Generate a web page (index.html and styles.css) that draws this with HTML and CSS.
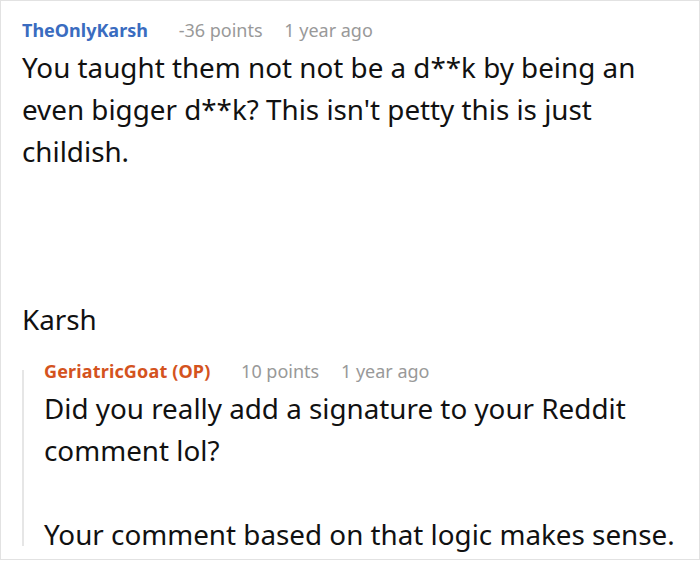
FILE: index.html
```html
<!DOCTYPE html>
<html lang="en">
<head>
    <meta charset="UTF-8">
    <meta name="viewport" content="width=device-width, initial-scale=1.0">
    <title>Comments</title>
    <link rel="stylesheet" href="styles.css">
</head>
<body>
    <div class="thread">
        <div class="comment">
            <div class="meta">
                <span class="author">TheOnlyKarsh</span>
                <span class="points">-36 points</span>
                <span class="time">1 year ago</span>
            </div>
            <div class="body">
                <p>You taught them not not be a d**k by being an even bigger d**k? This isn't petty this is just childish.</p>
                <p class="gap"></p>
                <p>Karsh</p>
            </div>
            <div class="comment reply">
                <div class="meta">
                    <span class="author op">GeriatricGoat (OP)</span>
                    <span class="points">10 points</span>
                    <span class="time">1 year ago</span>
                </div>
                <div class="body">
                    <p>Did you really add a signature to your Reddit comment lol?</p>
                    <p>Your comment based on that logic makes sense.</p>
                </div>
            </div>
        </div>
    </div>
</body>
</html>
```

FILE: styles.css
```css
body {
    margin: 0;
    font-family: "Noto Sans", sans-serif;
    background: white;
    color: #111;
}
.thread {
    height: 560px;
    box-sizing: border-box;
    border: 1px solid #e2e2e2;
    overflow: hidden;
    padding: 17px 0 0 21px;
}
.meta {
    font-size: 18px;
    line-height: 24px;
    color: #999;
}
.author {
    color: #3a6cc0;
    font-weight: bold;
}
.author.op {
    color: #d4531e;
    letter-spacing: 0.15px;
}
.points {
    margin-left: 26px;
}
.time {
    margin-left: 17px;
}
.body {
    font-size: 27.8px;
    line-height: 42px;
    margin-top: 4px;
}
.body p {
    margin: 0 0 42px 0;
}
.body p:last-child {
    margin-bottom: 0;
}
.body p.gap {
    height: 42px;
}
.reply {
    position: relative;
    margin-top: 19px;
    padding-left: 22px;
}
.reply::before {
    content: "";
    position: absolute;
    left: 0;
    top: 11px;
    bottom: 9px;
    width: 2px;
    background: #e6e6e6;
}
```
